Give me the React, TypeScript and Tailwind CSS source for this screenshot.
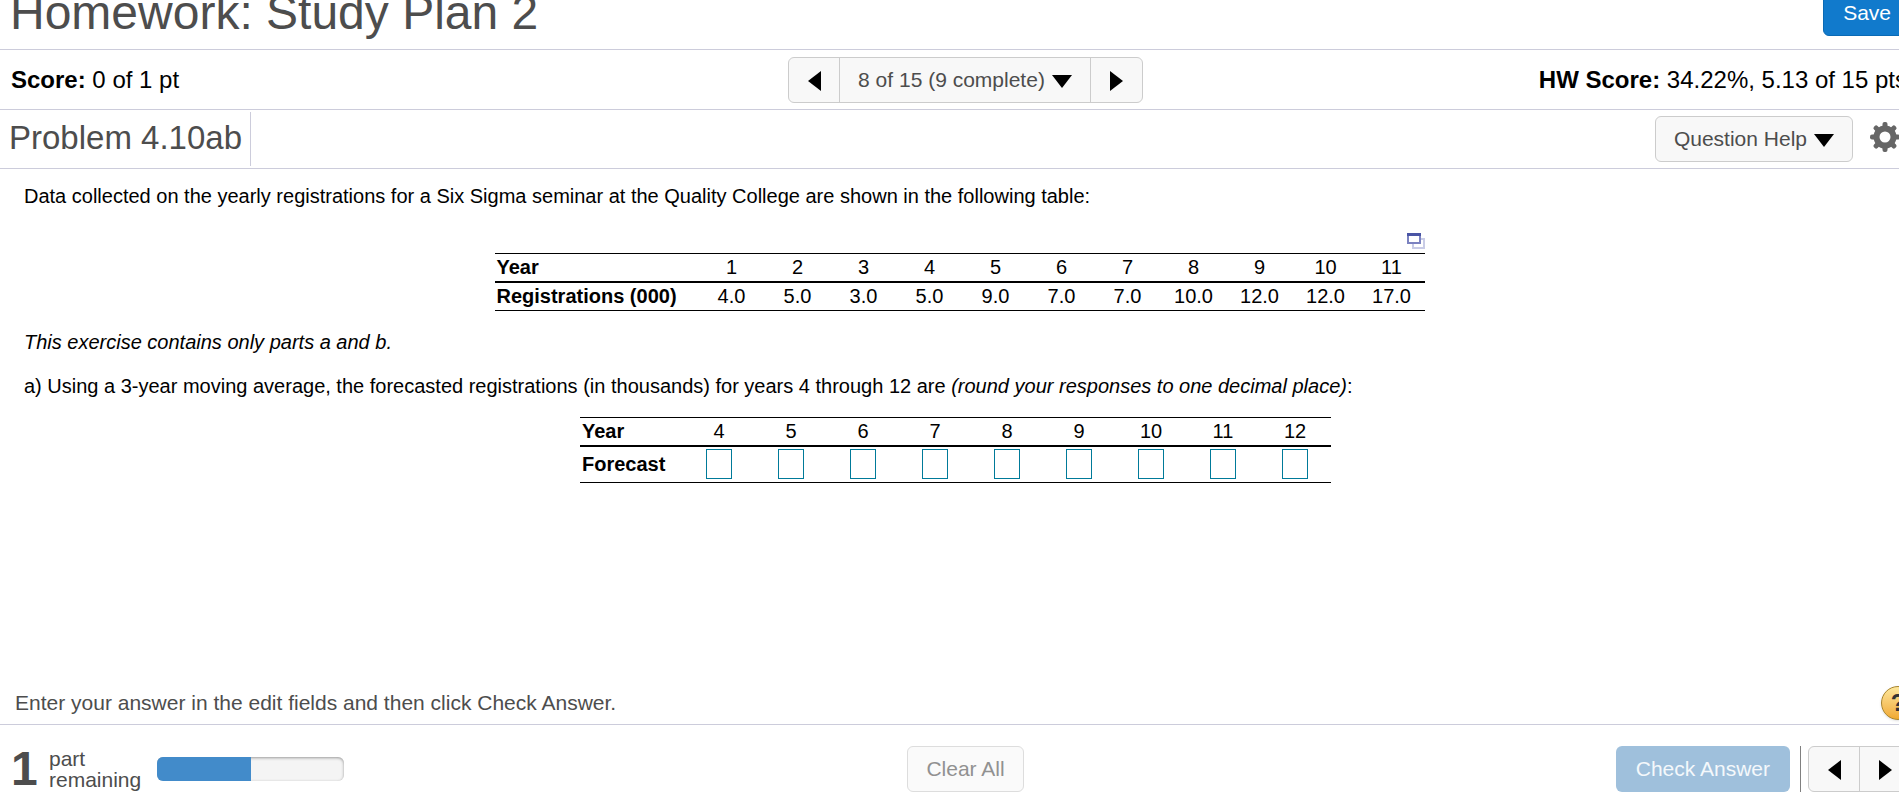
import type { ReactNode } from "react";

const REGISTRATIONS = [
  { year: 1, value: "4.0" },
  { year: 2, value: "5.0" },
  { year: 3, value: "3.0" },
  { year: 4, value: "5.0" },
  { year: 5, value: "9.0" },
  { year: 6, value: "7.0" },
  { year: 7, value: "7.0" },
  { year: 8, value: "10.0" },
  { year: 9, value: "12.0" },
  { year: 10, value: "12.0" },
  { year: 11, value: "17.0" },
];

const FORECAST_YEARS = [4, 5, 6, 7, 8, 9, 10, 11, 12];

const ARROWS = {
  left: { width: 13, height: 20, d: "M13 0v20L0 10z" },
  right: { width: 13, height: 20, d: "M0 0v20l13-10z" },
  down: { width: 20, height: 13, d: "M0 0h20L10 13z" },
};

function Arrow({ dir }: { dir: keyof typeof ARROWS }) {
  const a = ARROWS[dir];
  return (
    <svg width={a.width} height={a.height} viewBox={`0 0 ${a.width} ${a.height}`} className="mt-0.5 fill-black" aria-hidden="true">
      <path d={a.d} />
    </svg>
  );
}

function ButtonGroup({ children }: { children: ReactNode }) {
  return (
    <div className="flex h-[46px] divide-x divide-[#ccc] overflow-hidden rounded-md border border-[#ccc] bg-[#f8f8f8]">
      {children}
    </div>
  );
}

function ArrowButton({ dir, label }: { dir: "left" | "right"; label: string }) {
  return (
    <button type="button" aria-label={label} className="flex w-[51px] items-center justify-center">
      <Arrow dir={dir} />
    </button>
  );
}

function Gear() {
  return (
    <svg width="30" height="30" viewBox="-15 -15 30 30" aria-hidden="true">
      <g fill="#666">
        {[0, 45, 90, 135].map((deg) => (
          <rect key={deg} x="-2.5" y="-15" width="5" height="30" rx="2" transform={`rotate(${deg})`} />
        ))}
        <circle r="11.5" />
      </g>
      <circle r="5.5" fill="#fff" />
    </svg>
  );
}

function PopOut() {
  return (
    <svg width="18" height="16" viewBox="0 0 18 16" fill="none" aria-hidden="true">
      <path d="M14 6h3v9H6v-4" stroke="#c9cce6" strokeWidth="2" />
      <rect x="1" y="1" width="12" height="9" fill="#fff" stroke="#7b82c0" strokeWidth="2" />
      <path d="M0 1.5h14" stroke="#4a55a5" strokeWidth="3" />
    </svg>
  );
}

export default function App() {
  return (
    <div className="h-screen overflow-hidden bg-white font-['Liberation_Sans',Arial,sans-serif] text-black">
      <div className="-mt-5 flex h-[calc(100%+20px)] w-[calc(100%+32px)] flex-col">
        <header className="flex items-start justify-between border-b border-[#ccccdb] pt-2.5 pr-5 pb-[13px] pl-[10px]">
          <h1 className="text-[48px] leading-[46px] text-[#4d4d4d]">Homework: Study Plan 2</h1>
          <button type="button" className="h-[46px] rounded-md border border-[#0a6ab5] bg-[#117acc] px-[19px] text-[21px] text-white">
            Save
          </button>
        </header>

        <section className="grid grid-cols-[1fr_auto_1fr] items-center border-b border-[#ccccdb] px-[11px] pt-[7px] pb-1.5 text-[24px]">
          <p>
            <b>Score:</b> 0 of 1 pt
          </p>
          <ButtonGroup>
            <ArrowButton dir="left" label="Previous question" />
            <button type="button" className="flex items-center gap-[7px] px-[18px] text-[21px] text-[#4d4d4d]">
              8 of 15 (9 complete)
              <Arrow dir="down" />
            </button>
            <ArrowButton dir="right" label="Next question" />
          </ButtonGroup>
          <p className="pr-[13px] text-right">
            <b>HW Score:</b> 34.22%, 5.13 of 15 pts
          </p>
        </section>

        <section className="flex items-center justify-between border-b border-[#ccccdb] pr-[31px]">
          <h2 className="my-0.5 border-r border-[#ccccdb] pr-2 pb-0.5 pl-[9px] text-[33px] leading-[52px] text-[#4d4d4d]">
            Problem 4.10ab
          </h2>
          <div className="flex items-center gap-[17px]">
            <button
              type="button"
              className="flex h-[46px] items-center gap-[7px] rounded-md border border-[#ccc] bg-[#f8f8f8] px-[18px] text-[21px] text-[#4d4d4d]"
            >
              Question Help
              <Arrow dir="down" />
            </button>
            <button type="button" aria-label="Settings" className="pb-1">
              <Gear />
            </button>
          </div>
        </section>

        <main className="flex-1 pt-[15px] pr-9 pl-6 text-[20px] leading-6">
          <p>
            Data collected on the yearly registrations for a Six Sigma seminar at the Quality College are shown in the
            following table:
          </p>

          <div className="mx-auto mt-[25px] w-fit">
            <div className="flex justify-end pb-1">
              <button type="button" aria-label="Open table in a new window">
                <PopOut />
              </button>
            </div>
            <table className="border-y border-black text-center">
              <thead>
                <tr className="h-7 border-b-2 border-black">
                  <th className="w-[204px] pl-0.5 text-left">Year</th>
                  {REGISTRATIONS.map((r) => (
                    <th key={r.year} className="w-[66px] font-normal">
                      {r.year}
                    </th>
                  ))}
                </tr>
              </thead>
              <tbody>
                <tr className="h-[29px]">
                  <th className="pl-0.5 text-left">Registrations (000)</th>
                  {REGISTRATIONS.map((r) => (
                    <td key={r.year}>{r.value}</td>
                  ))}
                </tr>
              </tbody>
            </table>
          </div>

          <p className="mt-[19px] italic">This exercise contains only parts a and b.</p>
          <p className="mt-5">
            a) Using a 3-year moving average, the forecasted registrations (in thousands) for years 4 through 12 are{" "}
            <i>(round your responses to one decimal place)</i>:
          </p>

          <div className="mt-[19px] flex justify-center pr-2">
            <table className="border-y border-black text-center">
              <thead>
                <tr className="h-7 border-b-2 border-black">
                  <th className="w-[103px] pl-0.5 text-left">Year</th>
                  {FORECAST_YEARS.map((year) => (
                    <th key={year} className="w-[72px] font-normal">
                      {year}
                    </th>
                  ))}
                </tr>
              </thead>
              <tbody>
                <tr className="h-[37px]">
                  <th className="pl-0.5 text-left">Forecast</th>
                  {FORECAST_YEARS.map((year) => (
                    <td key={year}>
                      <input
                        type="text"
                        aria-label={`Forecast for year ${year}`}
                        className="mx-auto block h-[30px] w-[26px] border border-[#007a99] text-center"
                      />
                    </td>
                  ))}
                </tr>
              </tbody>
            </table>
          </div>
        </main>

        <div className="flex items-center justify-between pr-4 pb-1 pl-[15px] text-[21px] text-[#4d4d4d]">
          <p>Enter your answer in the edit fields and then click Check Answer.</p>
          <button
            type="button"
            aria-label="Help"
            className="size-[34px] rounded-full border border-[#a8842c] bg-linear-to-b from-[#fde79a] to-[#f0a92e] text-[24px] leading-8 font-bold text-[#333] shadow"
          >
            ?
          </button>
        </div>

        <footer className="grid grid-cols-[1fr_auto_1fr] items-center border-t border-[#ccccdb] px-[11px] pt-[21px] pb-[9px] text-[21px] text-[#4d4d4d]">
          <div className="flex items-center">
            <span className="w-[38px] text-[48px] leading-[46px] font-bold">1</span>
            <p className="leading-[21px]">
              part
              <br />
              remaining
            </p>
            <div
              role="progressbar"
              aria-label="Parts completed"
              aria-valuenow={50}
              className="ml-4 h-6 w-[187px] overflow-hidden rounded-md bg-[#f4f4f4] shadow-[inset_0_1px_3px_#999]"
            >
              <div className="h-full w-1/2 bg-[#428bca]" />
            </div>
          </div>
          <button type="button" disabled className="h-[46px] rounded-md border border-[#ddd] bg-[#fafafa] px-[18px] text-[#919191]">
            Clear All
          </button>
          <div className="flex justify-end pr-2">
            <button type="button" disabled className="h-[46px] rounded-md bg-[#9fc0dc] px-5 text-[#f4f8fb]">
              Check Answer
            </button>
            <div className="mr-[7px] ml-[10px] w-px bg-[#808080]" />
            <ButtonGroup>
              <ArrowButton dir="left" label="Previous part" />
              <ArrowButton dir="right" label="Next part" />
            </ButtonGroup>
          </div>
        </footer>
      </div>
    </div>
  );
}
